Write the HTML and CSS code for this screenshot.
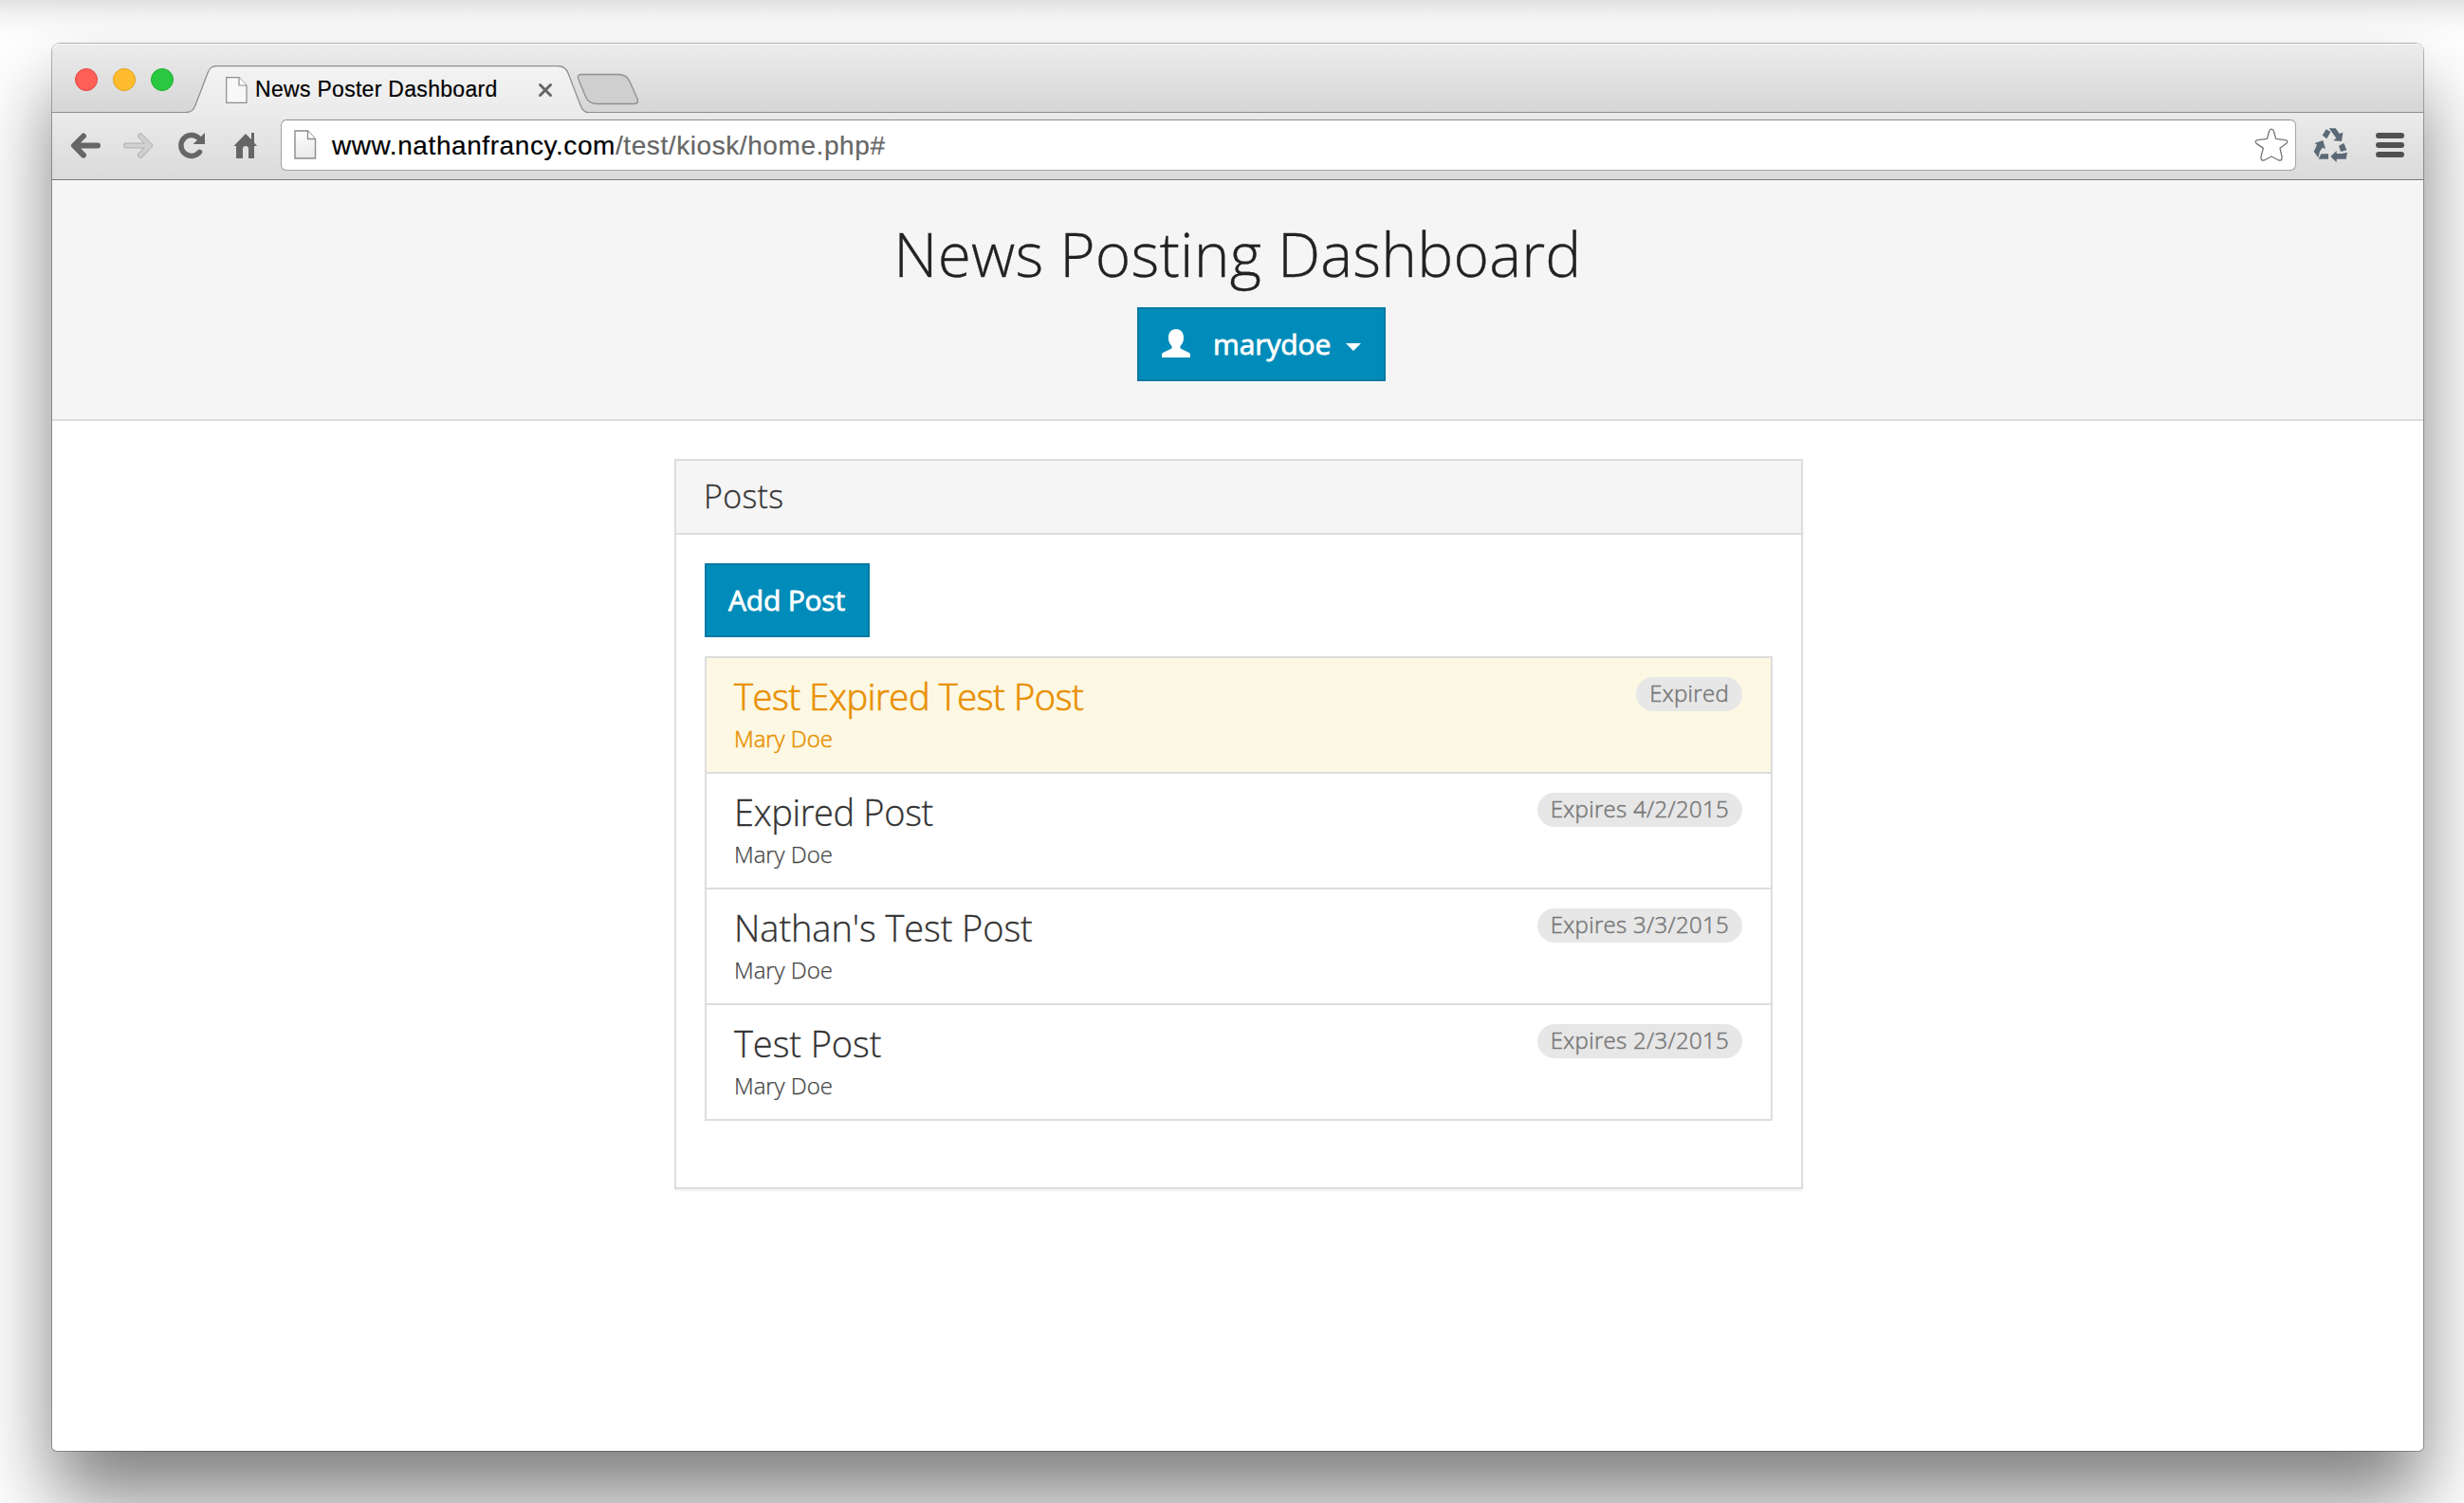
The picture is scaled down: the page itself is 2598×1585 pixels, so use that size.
FILE: index.html
```html
<!DOCTYPE html>
<html lang="en">
<head>
<meta charset="utf-8">
<title>News Poster Dashboard</title>
<link rel="stylesheet" href="styles.css">
</head>
<body>
<div class="window">
  <div class="tabstrip">
    <div class="lights"><span class="light red"></span><span class="light yellow"></span><span class="light green"></span></div>
    <div class="tab">
      <svg class="tab-shape" width="424" height="51" viewBox="196 69 424 51">
        <defs><linearGradient id="tabfill" x1="0" y1="0" x2="0" y2="1"><stop offset="0" stop-color="#f3f3f3"/><stop offset="1" stop-color="#ebebeb"/></linearGradient></defs>
        <path d="M196 120V118.500C202 118.500 204 116 206 111L219 77C221 72 223 69.500 229 69.500H588C594 69.500 597 72 599 77L612 111C614 116 616 118.500 620 118.500V120Z" fill="url(#tabfill)"/>
        <path d="M196 118.500C202 118.500 204 116 206 111L219 77C221 72 223 69.500 229 69.500H588C594 69.500 597 72 599 77L612 111C614 116 616 118.500 620 118.500" fill="none" stroke="#8f8f8f" stroke-width="1.300"/>
      </svg>
      <svg class="tab-page" width="23" height="28" viewBox="0 0 23 28"><path d="M.7.700H14L22 9V27.300H.7Z" fill="#f8f8f8" stroke="#8c8c8c" stroke-width="1.200"/><path d="M14 .7V9H22" fill="#fff" stroke="#8c8c8c" stroke-width="1.200"/></svg>
      <span class="tab-title">News Poster Dashboard</span>
      <svg class="tab-close" width="16" height="16" viewBox="0 0 16 16"><path d="M2.500 2.500L13.500 13.500M13.500 2.500L2.500 13.500" stroke="#666" stroke-width="3" stroke-linecap="round"/></svg>
    </div>
    <svg class="new-tab" width="66" height="34" viewBox="608 77 66 34"><path d="M613 78.500H652C658 78.500 662 81 664 86L672 104C673.500 108 672 109.500 668 109.500H630C623 109.500 619.500 107 617.500 102L610 84C608.500 80 609.500 78.500 613 78.500Z" fill="#cfcfcf" stroke="#909090" stroke-width="1.300"/></svg>
  </div>
  <div class="toolbar">
    <svg class="back" width="34" height="30" viewBox="74 138 34 30"><path d="M103 153.500H79M88 143.500L78 153.500L88 163.700" fill="none" stroke="#666" stroke-width="6" stroke-linecap="round" stroke-linejoin="round"/></svg>
    <svg class="forward" width="34" height="30" viewBox="128 138 34 30"><g fill="none" stroke-linecap="round" stroke-linejoin="round"><path d="M133 153.500H157M148 143.500L158 153.500L148 163.700" stroke="#b1b1b1" stroke-width="6"/><path d="M133 153.500H157M148 143.500L158 153.500L148 163.700" stroke="#d0d0d0" stroke-width="4"/></g></svg>
    <svg class="reload" width="32" height="30" viewBox="187 138 32 30"><path d="M210.500 160.300A11 11 0 1 1 210 146" fill="none" stroke="#666" stroke-width="5.500" stroke-linecap="round"/><path d="M216 140V152H203.500Z" fill="#666"/></svg>
    <svg class="home" width="26" height="30" viewBox="246 138 26 30"><path d="M259 141L265 147V140H268V150.500L271 154H268V167H262V157Q262 154 259 154Q256 154 256 157V167H249V154H246.500Z" fill="#666"/></svg>
    <div class="urlbar">
      <svg class="url-page" width="24" height="32" viewBox="0 0 24 32"><defs><linearGradient id="page" x1="0" y1="0" x2="0" y2="1"><stop offset="0" stop-color="#fff"/><stop offset="1" stop-color="#e8e8e8"/></linearGradient></defs><path d="M1 1H14.500L22.500 9.500V30H1Z" fill="url(#page)" stroke="#8c8c8c" stroke-width="1.400"/><path d="M14.500 1V9.500H22.500" fill="#fff" stroke="#8c8c8c" stroke-width="1.400"/></svg>
      <span class="url">www.nathanfrancy.com<span class="url-path">/test/kiosk/home.php#</span></span>
      <svg class="star" width="36" height="36" viewBox="20 28 108 108"><path d="M67 37Q74 26 81 37L88 62L116 66Q130 68 121 77L101 92L107 118Q109 133 97 130L74 118L51 130Q39 133 41 118L48 92L27 77Q18 68 32 66L60 62Z" fill="#fff" stroke="#777" stroke-width="4" stroke-linejoin="round"/></svg>
    </div>
    <svg class="recycle" width="37" height="38" viewBox="207 29 111 114"><g fill="#5b6976"><path d="M236 55L248 36L262 44L250 66Z"/><path d="M257 33H278L290 50L301 46L297 74L270 72L280 64Z"/><path d="M212 80L238 71L246 98L236 94L228 106L223 126L209 106L219 85Z"/><path d="M224 130L232 114H255V130Z"/><path d="M288 88L304 80L313 102L294 107Z"/><path d="M262 122L281 104V113H298L315 109L311 130H281V141Z"/></g></svg>
    <svg class="menu" width="30" height="26" viewBox="0 0 30 26"><g fill="#505050"><rect width="30" height="6" rx="3"/><rect y="10" width="30" height="6" rx="3"/><rect y="20" width="30" height="6" rx="3"/></g></svg>
  </div>
  <header class="masthead">
    <h1>News Posting Dashboard</h1>
    <button class="btn user">
      <svg width="30" height="30" viewBox="0 0 30 30"><path d="M15 0C20 0 23 3.500 23 9C23 13 22 15.500 19.500 18V20.500C22 22 29 24.500 30 26V30H0V26C1 24.500 8 22 10.500 20.500V18C8 15.500 7 13 7 9C7 3.500 10 0 15 0Z" fill="#fff"/></svg>
      <span class="user-name">marydoe</span>
      <span class="caret"></span>
    </button>
  </header>
  <main class="panel">
    <h2 class="panel-heading">Posts</h2>
    <div class="panel-body">
      <button class="btn add">Add Post</button>
      <ul class="posts">
        <li class="post warning"><div><h3 class="tight">Test Expired Test Post</h3><p>Mary Doe</p></div><span class="badge">Expired</span></li>
        <li class="post"><div><h3 class="tight">Expired Post</h3><p>Mary Doe</p></div><span class="badge">Expires 4/2/2015</span></li>
        <li class="post"><div><h3>Nathan's Test Post</h3><p>Mary Doe</p></div><span class="badge">Expires 3/3/2015</span></li>
        <li class="post"><div><h3>Test Post</h3><p>Mary Doe</p></div><span class="badge">Expires 2/3/2015</span></li>
      </ul>
    </div>
  </main>
</div>
</body>
</html>
```
FILE: styles.css
```css
* { box-sizing: border-box; }
html { height: 1585px; overflow: hidden; }
body {
  margin: 0;
  height: 1585px;
  padding: 46px 43px 55px 55px;
  overflow: hidden;
  background: #fff linear-gradient(#e2e2e2, #f1f1f1 14px, #fbfbfb 28px, #fff 44px) no-repeat;
  font-family: "Open Sans", sans-serif;
  color: #333;
}
h1, h2, h3, p, ul { margin: 0; padding: 0; font-weight: 300; }
svg { display: block; flex: none; }

.window {
  width: 2500px;
  height: 1484px;
  background: #fff;
  border-radius: 8px 8px 5px 5px;
  box-shadow: 0 0 0 1px rgba(0,0,0,.28), 0 50px 82px rgba(0,0,0,.5);
}

/* Browser chrome */
.tabstrip {
  display: flex;
  align-items: flex-end;
  height: 73px;
  padding-left: 24px;
  border-radius: 8px 8px 0 0;
  background: linear-gradient(#ececec, #d6d6d6);
  border-bottom: 1px solid #8f8f8f;
  box-shadow: inset 0 1px 0 #f8f8f8;
}
.lights { display: flex; gap: 16px; width: 117px; align-self: center; margin-top: 4px; }
.light { width: 24px; height: 24px; border-radius: 50%; border: 1px solid; }
.red { background: #ff5f57; border-color: #e2463f; }
.yellow { background: #ffbd2e; border-color: #e1a116; }
.green { background: #28c940; border-color: #1dad2b; }
.tab {
  position: relative;
  display: flex;
  align-items: center;
  width: 424px;
  height: 51px;
  margin-bottom: -2px;
  padding-left: 42px;
}
.tab-shape { position: absolute; left: 0; top: 0; }
.tab-page, .tab-title, .tab-close { position: relative; }
.tab-title {
  width: 297px;
  margin-left: 8px;
  font: 23px "Liberation Sans", Arial, sans-serif;
  letter-spacing: .3px;
  color: #000;
  white-space: nowrap;
  -webkit-text-stroke: .2px #000;
}
.tab-close { margin-left: 1px; }
.new-tab { margin: 0 0 7px -12px; position: relative; }
.toolbar {
  display: flex;
  align-items: center;
  height: 71px;
  padding: 0 20px 2px 19px;
  background: linear-gradient(#ebebeb, #dadada);
  border-bottom: 1px solid #7c7c7c;
}
.forward { margin-left: 20px; }
.reload { margin-left: 25px; }
.home { margin-left: 27px; }
.urlbar {
  display: flex;
  align-items: center;
  width: 2125px;
  height: 54px;
  margin-left: 24px;
  padding-left: 13px;
  background: #fff;
  border: 1px solid #a3a3a3;
  border-top-color: #8d8d8d;
  border-radius: 6px;
}
.url {
  margin: 2px 0 0 16px;
  font: 28px "Liberation Sans", Arial, sans-serif;
  letter-spacing: .58px;
  color: #000;
  -webkit-text-stroke: .2px;
}
.url-path { color: #666; }
.star { margin: 0 7px 0 auto; }
.recycle { margin-left: 18px; }
.menu { margin-left: auto; }

/* Page */
.masthead {
  display: flex;
  flex-direction: column;
  align-items: center;
  height: 254px;
  padding-top: 33px;
  background: #f5f5f5;
  border-bottom: 2px solid #ddd;
}
h1 {
  font-size: 64px;
  line-height: 90px;
  letter-spacing: .17px;
  color: #222;
  -webkit-text-stroke: .3px;
}
.btn {
  display: flex;
  align-items: center;
  height: 78px;
  padding: 0 0 1px 24px;
  background: #008cba;
  border: 2px solid #0079a1;
  color: #fff;
  font: 400 30px "Open Sans", sans-serif;
  -webkit-text-stroke: .8px;
}
.user { width: 262px; margin: 11px 0 0 50px; }
.user-name { margin-left: 24px; width: 137px; text-align: left; letter-spacing: -.1px; }
.user svg { margin-top: -2px; }
.caret { border: 8px solid transparent; border-top-color: #fff; border-bottom: 0; margin: 6px 0 0 3px; }
.panel {
  width: 1190px;
  height: 770px;
  margin: 40px auto 0 656px;
  border: 2px solid #ddd;
  box-shadow: 0 2px 3px rgba(0,0,0,.05);
}
.panel-heading {
  height: 78px;
  padding-left: 29px;
  background: #f5f5f5;
  border-bottom: 2px solid #ddd;
  font-size: 34px;
  line-height: 75px;
  letter-spacing: .3px;
  -webkit-text-stroke: .3px;
}
.panel-body { padding: 30px; }
.add { width: 174px; padding-left: 23px; letter-spacing: -.2px; }
.posts { margin-top: 20px; list-style: none; border: 2px solid #ddd; border-bottom: 0; }
.post {
  display: flex;
  justify-content: space-between;
  align-items: flex-start;
  height: 122px;
  padding: 20px 30px 0 29px;
  border-bottom: 2px solid #ddd;
}
.post h3 { font-size: 38px; line-height: 40px; letter-spacing: -.08px; -webkit-text-stroke: .3px; }
.post h3.tight { letter-spacing: -.36px; }
.post p { margin-top: 8px; font-size: 24px; line-height: 34px; color: #444; letter-spacing: -.05px; -webkit-text-stroke: .25px; }
.warning { background: #fcf8e3; }
.warning h3, .warning p { color: #e99002; }
.post.warning h3 { -webkit-text-stroke: .7px; }
.post.warning p { -webkit-text-stroke: .5px; }
.badge {
  height: 36px;
  padding: 0 14px;
  border-radius: 18px;
  background: #e7e7e7;
  color: #777;
  font-size: 24px;
  line-height: 34px;
  font-weight: 300;
  letter-spacing: .3px;
  -webkit-text-stroke: .5px;
}
```
